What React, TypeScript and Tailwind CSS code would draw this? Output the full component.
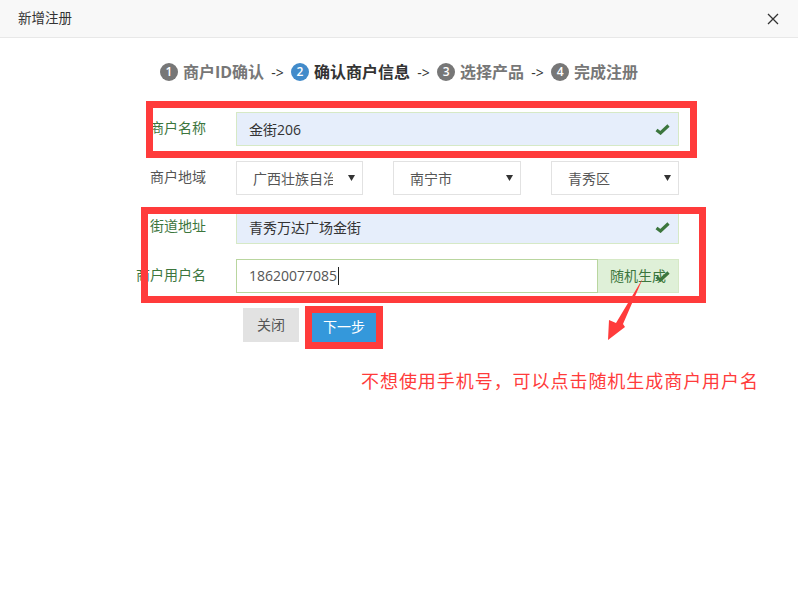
const font = { fontFamily: '"Open Sans", "Noto Sans CJK SC", sans-serif' };

function Check({ className }: { className: string }) {
  return (
    <svg viewBox="0 0 15 11" className={`absolute w-[15px] h-[11px] ${className}`}>
      <polyline points="1.5,6 5.5,9 13.5,1.5" fill="none" stroke="#3c763d" strokeWidth="3.2" />
    </svg>
  );
}

function Step({ n, text, active }: { n: number; text: string; active?: boolean }) {
  return (
    <div className={`flex items-center gap-[5px] ${active ? 'text-[#333]' : 'text-[#777]'}`}>
      <span className={`flex h-[18px] w-[18px] items-center justify-center rounded-full text-[12px] font-semibold text-white ${active ? 'bg-[#428bca]' : 'bg-[#777]'}`}>
        {n}
      </span>
      <span className="text-[16px] font-bold">{text}</span>
    </div>
  );
}

function Arrow() {
  return <span className="mx-[6px] w-[15px] whitespace-nowrap text-center text-[14px] text-[#333]">-&gt;</span>;
}

function Label({ text, green }: { text: string; green?: boolean }) {
  return (
    <div className={`flex h-[30px] items-start justify-end whitespace-nowrap text-[14px] leading-[31px] ${green ? 'text-[#3c763d]' : 'text-[#555]'}`}>
      {text}
    </div>
  );
}

function RegionSelect({ text, width }: { text: string; width: string }) {
  return (
    <div className={`relative flex h-[34px] items-center border border-[#e2e2e2] bg-white pl-[16px] text-[14px] text-[#555] ${width}`}>
      <span className="w-[80px] overflow-hidden whitespace-nowrap">{text}</span>
      <svg viewBox="0 0 7 6" className="absolute right-[7px] top-[13px] h-[6px] w-[7px]">
        <polygon points="0,0 7,0 3.5,6" fill="#333" />
      </svg>
    </div>
  );
}

export default function App() {
  return (
    <div className="relative h-[591px] w-[798px] overflow-hidden bg-white" style={font}>
      <header className="flex h-[38px] items-center justify-between border-b border-[#e8e8e8] bg-[#f8f8f8] pl-[18px] pr-[19px]">
        <h1 className="text-[13.5px] font-normal text-[#333]">新增注册</h1>
        <svg viewBox="0 0 12 12" className="h-[12px] w-[12px]">
          <path d="M1 1 L11 11 M11 1 L1 11" stroke="#333" strokeWidth="1.3" fill="none" />
        </svg>
      </header>

      <div className="flex h-[74px] items-start justify-center pt-[23px]">
        <div className="flex h-[22px] items-center">
          <Step n={1} text="商户ID确认" />
          <Arrow />
          <Step n={2} text="确认商户信息" active />
          <Arrow />
          <Step n={3} text="选择产品" />
          <Arrow />
          <Step n={4} text="完成注册" />
        </div>
      </div>

      <form className="grid grid-cols-[206px_443px] gap-x-[30px] gap-y-[15px]">
        <Label text="商户名称" green />
        <div className="relative flex h-[34px] items-center border border-[#d6e9c6] bg-[#e6eefb] pl-[12px] text-[14px] text-[#333]">
          金街206
          <Check className="right-[8px] top-[11px]" />
        </div>

        <Label text="商户地域" />
        <div className="flex justify-between">
          <RegionSelect text="广西壮族自治区" width="w-[127px]" />
          <RegionSelect text="南宁市" width="w-[128px]" />
          <RegionSelect text="青秀区" width="w-[128px]" />
        </div>

        <Label text="街道地址" green />
        <div className="relative flex h-[34px] items-center border border-[#d6e9c6] bg-[#e6eefb] pl-[12px] text-[14px] text-[#333]">
          青秀万达广场金街
          <Check className="right-[8px] top-[11px]" />
        </div>

        <Label text="商户用户名" green />
        <div className="flex h-[34px]">
          <div className="flex flex-1 items-center border border-[#b9d69f] bg-white pl-[12px] text-[14px] text-[#555]">
            <span className="border-r border-[#222] pr-[1px] leading-[18px]">18620077085</span>
          </div>
          <div className="relative flex w-[81px] items-center border border-l-0 border-[#d6e9c6] bg-[#dff0d8] pb-[2px] pl-[12px] text-[14px] text-[#3c763d]">
            <span className="whitespace-nowrap">随机生成</span>
            <Check className="right-[8px] top-[11px]" />
          </div>
        </div>

        <div />
        <div className="flex gap-[13px] pl-[7px]">
          <button type="button" className="h-[34px] w-[56px] bg-[#e2e2e2] pb-[2px] text-[14px] text-[#555]">关闭</button>
          <button type="button" className="mt-[5px] h-[29px] w-[64px] self-start bg-[#3498db] pb-[2px] text-[14px] text-white">下一步</button>
        </div>
      </form>

      {/* annotations drawn on top of the screenshot */}
      <div className="absolute left-[146px] top-[101px] h-[57px] w-[551px] border-[7px] border-[#ff3b3b]" />
      <div className="absolute left-[141px] top-[207px] h-[96px] w-[565px] border-[7px] border-[#ff3b3b]" />
      <div className="absolute left-[305px] top-[306px] h-[43px] w-[78px] border-[7px] border-[#ff3b3b]" />
      <svg viewBox="0 0 40 66" className="absolute left-[606px] top-[278px] h-[66px] w-[40px]">
        <polygon points="37,0 17,46 19,49 2,62 3,42 10,45" fill="#ff3b3b" />
      </svg>
      <div className="absolute left-[361px] top-[368px] whitespace-nowrap text-[18px] leading-[26px] tracking-[0.95px] text-[#ff3b3b]">
        不想使用手机号，可以点击随机生成商户用户名
      </div>
    </div>
  );
}
